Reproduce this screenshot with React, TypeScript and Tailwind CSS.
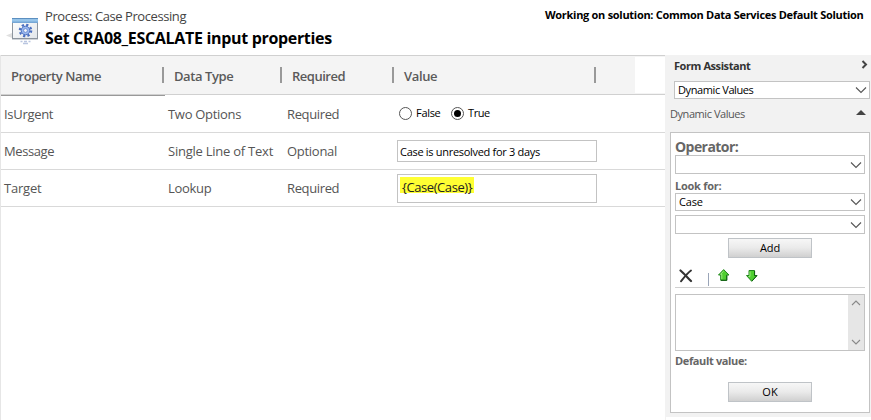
import type { ReactNode } from "react";

function ProcessIcon() {
  return (
    <svg width="34" height="29" viewBox="0 0 34 29" className="block">
      <defs>
        <linearGradient id="bar" x1="0" y1="0" x2="0" y2="1">
          <stop offset="0" stopColor="#3f76ad" />
          <stop offset="0.35" stopColor="#a3d0f2" />
          <stop offset="1" stopColor="#6d9fd0" />
        </linearGradient>
        <linearGradient id="pane" x1="0" y1="0" x2="1" y2="1">
          <stop offset="0" stopColor="#ffffff" />
          <stop offset="1" stopColor="#e2e6ea" />
        </linearGradient>
      </defs>
      <path d="M0 18.500 L6 16 V21 Z" fill="#e0e0e0" />
      <rect x="6.500" y="1.500" width="25" height="20" fill="url(#pane)" stroke="#8d959e" />
      <rect x="6" y="1" width="26" height="5" fill="url(#bar)" />
      <path d="M6 22.500 H32" stroke="#cfd3d8" />
      <circle cx="19.500" cy="13.500" r="5.700" fill="none" stroke="#4a6fc0" strokeWidth="2.200" strokeDasharray="2.240 2.237" />
      <circle cx="19.500" cy="13.500" r="4.300" fill="#9ab8ef" stroke="#4a6fc0" />
      <circle cx="19.500" cy="13.500" r="1.900" fill="#f4f7fc" stroke="#5d80c9" strokeWidth="0.800" />
      <path d="M14.500 24.500 h2 m1.500 0 h3 m1.500 0 h2 M17 26.500 h5" stroke="#b9c5e0" strokeWidth="1.500" />
    </svg>
  );
}

function Chevron({ up = false, color = "#555" }: { up?: boolean; color?: string }) {
  return (
    <svg width="12" height="8" viewBox="0 0 12 8" className="block shrink-0">
      <path d={up ? "M2 6 L6 2 L10 6" : color === "#888" ? "M2 2 L6 6 L10 2" : "M1 1.500 L6 6.500 L11 1.500"} fill="none" stroke={color} strokeWidth="1.100" />
    </svg>
  );
}

function Select({ children, className }: { children?: ReactNode; className: string }) {
  return (
    <div className={`flex items-center justify-between border border-[#c3c3c3] bg-white pl-[3px] pr-[2px] text-[11px] text-black ${className}`}>
      <span>{children}</span>
      <Chevron />
    </div>
  );
}

function Button({ children, className }: { children: ReactNode; className: string }) {
  return (
    <button className={`ml-[53px] block h-5 w-[84px] border border-[#bfc3c7] bg-linear-to-b from-[#f7f7f7] via-[#eaeaea] to-[#d0d0d0] text-center text-[11px] leading-[18px] text-black ${className}`}>
      {children}
    </button>
  );
}

function HeaderCell({ children, className }: { children?: ReactNode; className: string }) {
  return (
    <div className={`flex h-4 items-center border-r-2 border-[#999] ${className}`}>
      <span className="relative top-px leading-5">{children}</span>
    </div>
  );
}

function Row({ name, type, required, nameClass, typeClass, requiredClass, children }: {
  name: string; type: string; required: string;
  nameClass: string; typeClass: string; requiredClass: string; children: ReactNode;
}) {
  return (
    <div className="grid h-[37px] grid-cols-[164px_119px_110px_1fr] border-b border-[#d9d9d9] pl-[3px] text-[13px] leading-5 whitespace-nowrap text-[#555]">
      <div className={`pt-2 ${nameClass}`}>{name}</div>
      <div className={`pt-2 ${typeClass}`}>{type}</div>
      <div className={`pt-2 ${requiredClass}`}>{required}</div>
      <div className="text-black">{children}</div>
    </div>
  );
}

function Radio({ checked = false }: { checked?: boolean }) {
  return (
    <span className="flex size-[13px] items-center justify-center rounded-full border border-[#555] bg-white">
      {checked && <span className="size-[7px] rounded-full bg-black" />}
    </span>
  );
}

function Arrow({ down = false }: { down?: boolean }) {
  return (
    <svg width="12" height="12" viewBox="0 0 12 12" className="block">
      <path
        d={down ? "M3 0.500 H8.500 V5.500 H11 L5.700 11.300 L0.500 5.500 H3 Z" : "M5.700 0.600 L11 6 H8.700 V11.300 H2.700 V6 H0.500 Z"}
        fill="#4fce31" stroke="#23861f" strokeLinejoin="round"
      />
      <path d={down ? "M4 1.500 V6.500 H2.600" : "M5.700 2.200 L2.600 5.200 H3.800 V10.200"} fill="none" stroke="#a4f088" strokeWidth="0.900" />
      <path d={down ? "M8.600 1 V5.700 H10.800 L6 11.100" : "M8.800 6.300 V11.300 H3"} fill="none" stroke="#0f5c12" strokeWidth="1" />
    </svg>
  );
}

export default function App() {
  return (
    <div className="flex h-[420px] w-[871px] flex-col overflow-hidden bg-white font-['Open_Sans','Noto_Sans',sans-serif]">
      <header className="flex h-[55px] justify-between whitespace-nowrap">
        <div className="flex">
          <div className="w-[45px] pt-[17px] pl-[6px]"><ProcessIcon /></div>
          <div className="pt-[7px]">
            <div className="text-[13px] leading-[18px] tracking-[-0.42px] text-[#444]">Process: Case Processing</div>
            <h1 className="pt-px text-[16px] leading-6 font-bold tracking-[-0.32px] text-black">Set CRA08_ESCALATE input properties</h1>
          </div>
        </div>
        <div className="w-[326px] pt-[7px] text-[11px] leading-4 font-bold tracking-[-0.29px] text-black">
          Working on solution: Common Data Services Default Solution
        </div>
      </header>

      <div className="flex h-[365px]">
        <main className="w-[665px] border-l border-[#e6e6e6]">
          <div className="flex h-10 items-center border-y border-[#d0d0d0] bg-[#f4f4f4] text-[13px] font-semibold whitespace-nowrap text-[#5a5a5a]">
            <HeaderCell className="w-[163px] pl-[10px] tracking-[-0.45px]">Property Name</HeaderCell>
            <HeaderCell className="w-[118px] pl-[10px] tracking-[-0.42px]">Data Type</HeaderCell>
            <HeaderCell className="w-[112px] pl-[10px] tracking-[-0.48px]">Required</HeaderCell>
            <HeaderCell className="w-[202px] pl-[10px] tracking-[-0.35px]">Value</HeaderCell>
            <div className="ml-auto h-9 w-[30px] bg-white" />
          </div>
          <div className="h-px w-[164px] bg-[#999]" />
          <Row name="IsUrgent" type="Two Options" required="Required" nameClass="tracking-[-0.3px]" typeClass="tracking-[-0.3px]" requiredClass="tracking-[-0.36px]">
            <div className="flex items-center pt-[9px] pl-[2px] text-[11px] leading-4">
              <Radio />
              <span className="w-[35px] pl-1 tracking-[-0.3px]">False</span>
              <span className="pl-1"><Radio checked /></span>
              <span className="pl-1 tracking-[-0.4px]">True</span>
            </div>
          </Row>
          <Row name="Message" type="Single Line of Text" required="Optional" nameClass="tracking-[-0.4px]" typeClass="tracking-[-0.24px]" requiredClass="tracking-[-0.28px]">
            <div className="mt-[7px] h-[22px] w-[200px] border border-[#c3c3c3] pt-[3px] pl-[2px] text-[11px] leading-4 tracking-[-0.3px]">
              Case is unresolved for 3 days
            </div>
          </Row>
          <Row name="Target" type="Lookup" required="Required" nameClass="tracking-[-0.2px]" typeClass="tracking-[-0.32px]" requiredClass="tracking-[-0.36px]">
            <div className="mt-1 h-[29px] w-[200px] border border-[#c3c3c3] pt-[2px] pl-[2px]">
              <div className="h-4 w-[74px] bg-[#ffff33] pl-[2px] leading-5 tracking-[-0.42px] text-[#222]">{"{Case(Case)}"}</div>
            </div>
          </Row>
        </main>

        <aside className="w-[206px] border-l border-[#f2f2f2]">
          <div className="h-[362px] bg-[#f2f2f2] pl-1">
            <div className="flex h-[26px] items-start justify-between pt-[3px] pr-[3px] pl-1 text-[11px] leading-4 font-bold text-[#333]">
              <span className="tracking-[-0.42px]">Form Assistant</span>
              <svg width="7" height="9" viewBox="0 0 7 9" className="mt-[2px] block"><path d="M1.500 1 L5 4.500 L1.500 8" fill="none" stroke="#444" strokeWidth="2" /></svg>
            </div>
            <Select className="ml-1 h-[18px] w-[196px] tracking-[-0.4px]">Dynamic Values</Select>
            <div className="flex h-[33px] justify-between pt-[7px] pr-[5px] text-[11px] leading-4 text-[#555]">
              <span className="tracking-[-0.44px]">Dynamic Values</span>
              <svg width="10" height="5" viewBox="0 0 10 5" className="mt-1 block"><path d="M5 0 L10 5 H0 Z" fill="#444" /></svg>
            </div>
            <div className="h-[281px] w-[200px] border border-[#c3c3c3] bg-white px-1 text-[11px] font-bold text-[#666]">
              <div className="h-[22px] pt-1 text-[14px] leading-5 tracking-[-0.55px]">Operator:</div>
              <Select className="h-[19px] w-[190px]" />
              <div className="h-[19px] pt-1 leading-4 tracking-[-0.27px]">Look for:</div>
              <div className="font-normal">
                <Select className="h-[18px] tracking-[-0.2px]">Case</Select>
                <Select className="mt-1 h-[19px]" />
                <Button className="mt-1 tracking-[-0.14px]">Add</Button>
              </div>
              <div className="flex h-[30px] border-b border-[#d0d0d0] pt-[11px] pl-1">
                <svg width="14" height="14" viewBox="0 0 14 14" className="block">
                  <path d="M1.500 1.500 C5 4.500 8.500 8.500 12 12" fill="none" stroke="#333" strokeWidth="2.200" strokeLinecap="round" />
                  <path d="M12 1.500 C8 4.500 5 8.500 2 12.300" fill="none" stroke="#333" strokeWidth="1.900" strokeLinecap="round" />
                </svg>
                <div className="mt-1 ml-[15px] h-[13px] w-px bg-[#9aa5b8]" />
                <div className="ml-[9px]"><Arrow /></div>
                <div className="mt-px ml-4"><Arrow down /></div>
              </div>
              <div className="mt-[6px] flex h-[57px] justify-end border border-[#c3c3c3]">
                <div className="flex w-4 flex-col items-center justify-between bg-[#e6e6e6] py-1">
                  <Chevron up color="#888" />
                  <Chevron color="#888" />
                </div>
              </div>
              <div className="pt-[2px] leading-4 tracking-[-0.36px]">Default value:</div>
              <Button className="mt-[13px] font-normal">OK</Button>
            </div>
          </div>
        </aside>
      </div>
    </div>
  );
}
